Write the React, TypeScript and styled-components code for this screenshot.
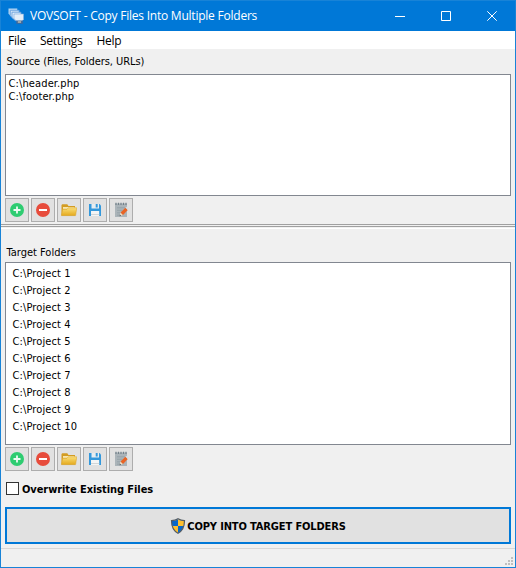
import React from "react";
import styled, { createGlobalStyle } from "styled-components";

const GlobalStyle = createGlobalStyle`
  * { box-sizing: border-box; }
  body { margin: 0; background: #f0f0f0; }
`;

const Window = styled.main`
  width: 516px;
  height: 568px;
  display: flex;
  flex-direction: column;
  overflow: hidden;
  background: #f0f0f0;
  border: 1px solid #1883d7;
  color: #000;
  font: 11px/13px "DejaVu Sans Condensed", "DejaVu Sans", sans-serif;
  white-space: nowrap;
`;

const TitleBar = styled.header`
  height: 30px;
  flex: none;
  display: flex;
  align-items: center;
  padding-left: 7px;
  background: #0078d7;
  color: #fff;
`;

const Title = styled.h1`
  flex: 1;
  margin: 0 0 0 6px;
  font: 400 12px/16px "Open Sans", sans-serif;
  letter-spacing: -0.23px;
`;

const CaptionButton = styled.button`
  width: 46px;
  height: 30px;
  display: flex;
  align-items: center;
  justify-content: center;
  padding: 0;
  border: 0;
  background: none;
  color: #fff;
`;

const MenuBar = styled.nav`
  height: 18px;
  flex: none;
  display: flex;
  gap: 14px;
  padding: 1px 0 0 7px;
  background: #fff;
  font: 12px/18px "Open Sans", sans-serif;
  letter-spacing: -0.25px;
`;

const Section = styled.section<{ $top: number }>`
  flex: none;
  padding: ${(p) => p.$top}px 4px 0;
`;

const Caption = styled.h2<{ $tracking?: number }>`
  height: 13px;
  margin: 0 0 0 1.5px;
  font: inherit;
  letter-spacing: ${(p) => p.$tracking ?? 0}px;
`;

const ListBox = styled.ul<{ $height: number; $row: number; $inset: number; $gap: number }>`
  height: ${(p) => p.$height}px;
  margin: ${(p) => p.$gap}px 0 0;
  padding: 2px ${(p) => p.$inset}px;
  background: #fff;
  border: 1px solid #828790;
  list-style: none;
  line-height: ${(p) => p.$row}px;
  letter-spacing: 0.12px;
`;

const Toolbar = styled.div`
  display: flex;
  gap: 2px;
  margin-top: 2px;
`;

const ToolButton = styled.button`
  width: 24px;
  height: 24px;
  display: flex;
  align-items: center;
  justify-content: center;
  padding: 0;
  background: #e1e1e1;
  border: 1px solid #adadad;
`;

const Splitter = styled.div`
  height: 5px;
  flex: none;
  margin-top: 2px;
  border-top: 1px solid #a0a0a0;
  border-bottom: 1px solid #fff;
  background: linear-gradient(#f0f0f0 1px, #a0a0a0 1px, #a0a0a0 2px, #f0f0f0 2px);
`;

const Option = styled.label`
  height: 13px;
  flex: none;
  display: flex;
  align-items: center;
  gap: 3px;
  margin: 11px 0 0 5px;
  font-weight: 700;
  letter-spacing: -0.08px;
`;

const OptionText = styled.span`
  padding-top: 2px;
`;

const CheckBox = styled.input`
  appearance: none;
  width: 13px;
  height: 13px;
  margin: 0;
  background: #fff;
  border: 1px solid #333;
`;

const CopyButton = styled.button`
  height: 37px;
  flex: none;
  display: flex;
  align-items: center;
  justify-content: center;
  margin: 12px 4px 0;
  padding: 0;
  background: #e1e1e1;
  border: 2px solid #0078d7;
  color: #000;
  font: inherit;
  font-weight: 700;
  letter-spacing: -0.13px;
`;

const CopyLabel = styled.span`
  padding: 2px 0 0 1px;
`;

const StatusBar = styled.footer`
  flex: 1;
  display: flex;
  align-items: flex-end;
  justify-content: flex-end;
  margin-top: 4px;
  padding: 0 2px 2px 0;
  border-top: 1px solid #d7d7d7;
`;

const Icon = styled.svg`
  display: block;
  flex: none;
`;

const AppIcon = () => (
  <Icon width="16" height="16" viewBox="0 0 16 16">
    <path d="M.5.5h8.8v8H3.2L.5 5.8z" fill="#b3d5f3" />
    <path d="M2.3 2.3h8.8v8.2H5L2.3 7.8z" fill="#cfe3f6" stroke="#5f9bdc" strokeWidth=".8" />
    <path d="M4 4.2h9v8.3H7.2L4 9.6z" fill="#dbe9f7" stroke="#5f9bdc" strokeWidth=".8" />
    <path d="M6 6h9.6v5.2l-1.8 2.3H9.2L6 10.8z" fill="#e4eef8" stroke="#76a8dd" strokeWidth=".6" />
    <path d="M8.3 12.5h6.5v3.3H8.3z" fill="#3f679b" />
    <path d="M9.8 13.3h3.3v1.4H9.8z" fill="#c3c2b4" />
  </Icon>
);

const AddIcon = () => (
  <Icon width="16" height="16" viewBox="0 0 16 16">
    <circle cx="8" cy="8" r="7" fill="#2ecc71" />
    <path d="M8 4.5v7M4.5 8h7" stroke="#eefbf3" strokeWidth="1.8" />
  </Icon>
);

const RemoveIcon = () => (
  <Icon width="16" height="16" viewBox="0 0 16 16">
    <circle cx="8" cy="8" r="7" fill="#e74c3c" />
    <path d="M4 8h8" stroke="#fff" strokeWidth="2" />
  </Icon>
);

const FolderIcon = () => (
  <Icon width="16" height="16" viewBox="0 0 16 16">
    <defs>
      <linearGradient id="folder" x1="0" y1="0" x2="0" y2="1">
        <stop offset="0" stopColor="#fbdf78" />
        <stop offset="1" stopColor="#e4a91d" />
      </linearGradient>
    </defs>
    <path d="M.5 13.5V3l.8-.8h5L7.5 4H14v9.5z" fill="#d39c22" />
    <path d="M2 5h11.5v2H2z" fill="#f7e6ae" />
    <path d="M.4 13.6 1.7 7.2H6l1.2-1.4h8.6l-1.2 7.8z" fill="url(#folder)" stroke="#d8a22a" strokeWidth=".5" />
  </Icon>
);

const SaveIcon = () => (
  <Icon width="16" height="16" viewBox="0 0 16 16">
    <path d="M2 2h10.5L14 3.5V14H2z" fill="#3498db" />
    <path d="M4.5 2H12v4.5H4.5z" fill="#e8edf0" />
    <path d="M8.7 2h2v3.5h-2z" fill="#3498db" />
    <path d="M4 9h8.2v5H4z" fill="#f4f5f5" />
    <path d="M4 12h8.2v1H4z" fill="#d1d6d8" />
  </Icon>
);

const EditIcon = () => (
  <Icon width="16" height="16" viewBox="0 0 16 16">
    <path d="M2 1.5h12V15H2z" fill="#abb4b9" />
    <path d="M3 .7v2.3M5.5.7v2.3M8 .7v2.3M10.5.7v2.3M13 .7v2.3" stroke="#74818a" strokeWidth="1.2" />
    <path d="M4 5.8h8M4 8.3h5.5M4 10.8h3.5M4 13.2h3" stroke="#919da4" strokeWidth=".8" />
    <path d="m6.6 14 .9-3.5 2.5 2.4z" fill="#f5dfc1" />
    <path d="m7.6 10.5 4.8-4.8 2.4 2.3-4.8 4.9z" fill="#ea6424" />
    <path d="m12.4 5.7 1-1 2.4 2.3-1 1z" fill="#d7dde0" />
    <path d="m6.5 14.2.4-1.6 1.2 1.1z" fill="#44505a" />
  </Icon>
);

const ShieldIcon = () => (
  <Icon width="16" height="16" viewBox="0 0 16 16">
    <defs>
      <clipPath id="shield">
        <path d="M8 1.2C6.3 2.3 4 3 1.8 3c0 5.6 1.5 9.4 6.2 12 4.7-2.6 6.2-6.4 6.2-12C12 3 9.7 2.3 8 1.2z" />
      </clipPath>
    </defs>
    <g clipPath="url(#shield)">
      <path d="M0 0h8v8H0zM8 8h8v8H8z" fill="#0867c9" />
      <path d="M8 0h8v8H8zM0 8h8v8H0z" fill="#ffc02f" />
    </g>
    <path
      d="M8 .8C6.2 2 3.8 2.7 1.5 2.7c0 6 1.6 9.9 6.5 12.6 4.9-2.7 6.5-6.6 6.5-12.6C12.2 2.7 9.8 2 8 .8z"
      fill="none"
      stroke="#525b63"
      strokeWidth="1.2"
    />
  </Icon>
);

const GripIcon = () => (
  <Icon width="8" height="8" viewBox="0 0 8 8" fill="#bfbfbf" shapeRendering="crispEdges">
    <path d="M6 0h2v2H6zM3 3h2v2H3zM6 3h2v2H6zM0 6h2v2H0zM3 6h2v2H3zM6 6h2v2H6z" />
  </Icon>
);

const tools = [
  { label: "Add", Glyph: AddIcon },
  { label: "Remove", Glyph: RemoveIcon },
  { label: "Open", Glyph: FolderIcon },
  { label: "Save", Glyph: SaveIcon },
  { label: "Edit", Glyph: EditIcon },
];

const captionButtons = [
  { label: "Minimize", path: "M0 5.5h10" },
  { label: "Maximize", path: "M.5.5h9v9h-9z" },
  { label: "Close", path: "m.3.3 9.4 9.4m0-9.4L.3 9.7" },
];

const sources = ["C:\\header.php", "C:\\footer.php"];
const targets = Array.from({ length: 10 }, (_, i) => `C:\\Project ${i + 1}`);

const ListTools = () => (
  <Toolbar>
    {tools.map(({ label, Glyph }) => (
      <ToolButton key={label} aria-label={label}>
        <Glyph />
      </ToolButton>
    ))}
  </Toolbar>
);

export default function App() {
  return (
    <>
      <GlobalStyle />
      <Window>
        <TitleBar>
          <AppIcon />
          <Title>VOVSOFT - Copy Files Into Multiple Folders</Title>
          {captionButtons.map(({ label, path }) => (
            <CaptionButton key={label} aria-label={label}>
              <Icon width="10" height="10" viewBox="0 0 10 10" fill="none" stroke="currentColor">
                <path d={path} />
              </Icon>
            </CaptionButton>
          ))}
        </TitleBar>
        <MenuBar>
          <span>File</span>
          <span>Settings</span>
          <span>Help</span>
        </MenuBar>
        <Section $top={6}>
          <Caption $tracking={-0.06}>Source (Files, Folders, URLs)</Caption>
          <ListBox $height={122} $row={13} $inset={2.5} $gap={6}>
            {sources.map((path) => (
              <li key={path}>{path}</li>
            ))}
          </ListBox>
          <ListTools />
        </Section>
        <Splitter />
        <Section $top={17}>
          <Caption>Target Folders</Caption>
          <ListBox $height={183} $row={17} $inset={6.5} $gap={3}>
            {targets.map((path) => (
              <li key={path}>{path}</li>
            ))}
          </ListBox>
          <ListTools />
        </Section>
        <Option>
          <CheckBox type="checkbox" />
          <OptionText>Overwrite Existing Files</OptionText>
        </Option>
        <CopyButton>
          <ShieldIcon />
          <CopyLabel>COPY INTO TARGET FOLDERS</CopyLabel>
        </CopyButton>
        <StatusBar>
          <GripIcon />
        </StatusBar>
      </Window>
    </>
  );
}
